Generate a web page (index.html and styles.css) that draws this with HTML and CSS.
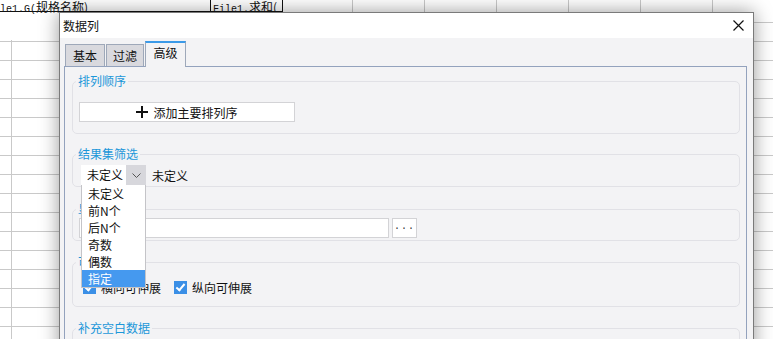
FILE: index.html
```html
<!DOCTYPE html>
<html lang="zh-CN">
<head>
  <meta charset="UTF-8">
  <title>数据列</title>
  <link rel="stylesheet" href="styles.css">
</head>
<body>
  <div class="sheet">
    <div class="sheet-head">
      <div class="cell cell-a"><span class="mono">le1.G(</span>规格名称)</div>
      <div class="cell cell-b"><span class="mono">File1.</span>求和(</div>
    </div>
  </div>

  <div class="dialog">
    <div class="dialog-title">
      <span>数据列</span>
      <svg class="close" width="11" height="11" viewBox="0 0 11 11">
        <path d="M0.5 0.5 L10.5 10.5 M10.5 0.5 L0.5 10.5" stroke="#111" stroke-width="1.2" fill="none"/>
      </svg>
    </div>

    <div class="dialog-body">
      <div class="tabs">
        <div class="tab tab-first">基本</div>
        <div class="tab">过滤</div>
        <div class="tab active">高级</div>
      </div>

      <div class="panel">
        <fieldset class="group g-sort">
          <legend>排列顺序</legend>
          <button class="add-btn">
            <svg width="12" height="12" viewBox="0 0 12 12">
              <path d="M6 0 V12 M0 6 H12" stroke="#111" stroke-width="2" fill="none"/>
            </svg>
            添加主要排列序
          </button>
        </fieldset>

        <fieldset class="group g-filter">
          <legend>结果集筛选</legend>
          <div class="filter-row">
            <div class="combo">
              <span class="combo-text">未定义</span>
              <span class="combo-arrow">
                <svg width="9" height="5" viewBox="0 0 9 5">
                  <path d="M0.5 0.5 L4.5 4.5 L8.5 0.5" stroke="#555" stroke-width="1" fill="none"/>
                </svg>
              </span>
              <ul class="dropdown">
                <li>未定义</li>
                <li>前N个</li>
                <li>后N个</li>
                <li>奇数</li>
                <li>偶数</li>
                <li class="selected">指定</li>
              </ul>
            </div>
            <span class="filter-value">未定义</span>
          </div>
        </fieldset>

        <fieldset class="group g-value">
          <legend>显示值</legend>
          <div class="value-row">
            <input class="text-field" type="text">
            <button class="more-btn">...</button>
          </div>
        </fieldset>

        <fieldset class="group g-expand">
          <legend>可扩展性</legend>
          <div class="check-row">
            <label class="check"><span class="box"></span>横向可伸展</label>
            <label class="check"><span class="box"></span>纵向可伸展</label>
          </div>
        </fieldset>

        <fieldset class="group g-blank">
          <legend>补充空白数据</legend>
          <div class="blank-row"></div>
        </fieldset>
      </div>
    </div>
  </div>
</body>
</html>
```

FILE: styles.css
```css
body {
  margin: 0;
  padding: 0;
  font-family: "Noto Sans CJK SC", "Liberation Sans", sans-serif;
  font-size: 12px;
  color: #111;
  background: #fff;
  overflow: hidden;
}
.sheet {
  position: relative;
  width: 773px;
  height: 339px;
  background-color: #fff;
  background-image:
    repeating-linear-gradient(to right, transparent 0 71px, #c9c9c9 71px 72px),
    repeating-linear-gradient(to bottom, transparent 0 18px, #c9c9c9 18px 19px);
  background-position: 281px 0, 0 4px;
}
.sheet-head {
  display: flex;
}
.cell {
  height: 11px;
  line-height: 11px;
  background: #fff;
  border-bottom: 1px solid #111;
  border-right: 1px solid #111;
  white-space: nowrap;
  overflow: hidden;
  font-size: 12px;
}
.cell-a {
  width: 210px;
  height: 40px;
  line-height: 13px;
  border-bottom: none;
  background: linear-gradient(to bottom, #fff 0 11px, #111 11px 12px, #fff 12px);
}
.cell-b {
  width: 69px;
  padding-left: 2px;
  line-height: 13px;
}
.mono {
  font-family: "Liberation Mono", monospace;
  font-size: 10px;
}

.dialog {
  position: absolute;
  left: 59px;
  top: 12px;
  width: 693px;
  height: 400px;
  border: 1px solid #7a7a7a;
  background: #f3f3f5;
  box-shadow: 0 0 18px rgba(0, 0, 0, 0.4);
  overflow: hidden;
}
.dialog-title {
  height: 25px;
  line-height: 25px;
  background: #fff;
  padding: 0 9px 0 3px;
  display: flex;
  justify-content: space-between;
  align-items: center;
}
.close {
  display: block;
}
.dialog-body {
  padding: 3px 6px 0 4px;
}
.tabs {
  display: flex;
  align-items: flex-end;
  margin-left: 1px;
  height: 25px;
  position: relative;
  z-index: 2;
}
.tab {
  width: 36px;
  height: 21px;
  line-height: 21px;
  text-align: center;
  background: #d9d9de;
  border: 1px solid #9ea8b9;
  border-bottom: none;
  margin-left: 1px;
}
.tab-first {
  width: 38px;
  margin-left: 0;
}
.tab.active {
  width: 39px;
  height: 24px;
  line-height: 20px;
  background: #f3f3f5;
  border-top: 2px solid #3b9ae8;
  margin-bottom: -1px;
}
.panel {
  border: 1px solid #93a2bd;
  background: #f3f3f5;
  padding: 7px 6px 0 7px;
  height: 300px;
}
.group {
  border: 1px solid #e1e1e6;
  border-radius: 5px;
  margin: 0 0 14px;
  padding: 0 6px;
  min-width: 0;
}
.group legend {
  color: #1c97d9;
  padding: 0 2px;
  margin-left: -3px;
  line-height: 14px;
}
.g-sort {
  padding-top: 14px;
  padding-bottom: 11px;
  margin-bottom: 13px;
}
.g-filter {
  padding-top: 4px;
  padding-bottom: 1px;
  margin-bottom: 15px;
}
.g-value {
  padding-top: 2px;
  padding-bottom: 2px;
}
.g-expand {
  padding-top: 11px;
  padding-bottom: 12px;
}
.g-blank {
  padding-top: 10px;
}

.add-btn {
  display: flex;
  align-items: center;
  justify-content: center;
  gap: 5px;
  width: 216px;
  height: 20px;
  padding: 0;
  background: #fff;
  border: 1px solid #d3d3d6;
  font-family: inherit;
  font-size: 12px;
  color: #111;
}

.filter-row {
  display: flex;
  align-items: center;
  gap: 6px;
  margin-left: 2px;
}
.combo {
  position: relative;
  display: flex;
  width: 65px;
  height: 20px;
  background: #fff;
}
.combo-text {
  flex: 1;
  padding-left: 6px;
  line-height: 20px;
}
.combo-arrow {
  width: 20px;
  background: #d7d7dc;
  display: flex;
  align-items: center;
  justify-content: center;
}
.dropdown {
  position: absolute;
  left: 0;
  top: 20px;
  width: 63px;
  margin: 0;
  padding: 0;
  list-style: none;
  background: #fff;
  border: 1px solid #c4c4c8;
  border-top: none;
  z-index: 10;
}
.dropdown li {
  height: 17px;
  line-height: 17px;
  padding-left: 6px;
}
.dropdown li.selected {
  background: #4599ef;
  color: #fff;
}

.value-row {
  display: flex;
  gap: 2px;
}
.text-field {
  width: 308px;
  height: 18px;
  margin: 0;
  padding: 0;
  border: 1px solid #d3d3d6;
  background: #fff;
}
.more-btn {
  width: 25px;
  height: 20px;
  margin-left: 1px;
  padding: 0 0 4px;
  background: #fff;
  border: 1px solid #d3d3d6;
  font-family: "Liberation Mono", monospace;
  font-size: 10px;
  color: #333;
  letter-spacing: 1px;
}

.check-row {
  display: flex;
  align-items: center;
  height: 14px;
  margin-left: 4px;
}
.check {
  display: flex;
  align-items: center;
  gap: 5px;
  margin-right: 13px;
}
.box {
  position: relative;
  width: 13px;
  height: 13px;
  background: #3b8fe6;
}
.box::after {
  content: "";
  position: absolute;
  left: 4px;
  top: 1px;
  width: 3px;
  height: 7px;
  border-right: 2px solid #fff;
  border-bottom: 2px solid #fff;
  transform: rotate(40deg);
}
.blank-row {
  height: 30px;
}
```
